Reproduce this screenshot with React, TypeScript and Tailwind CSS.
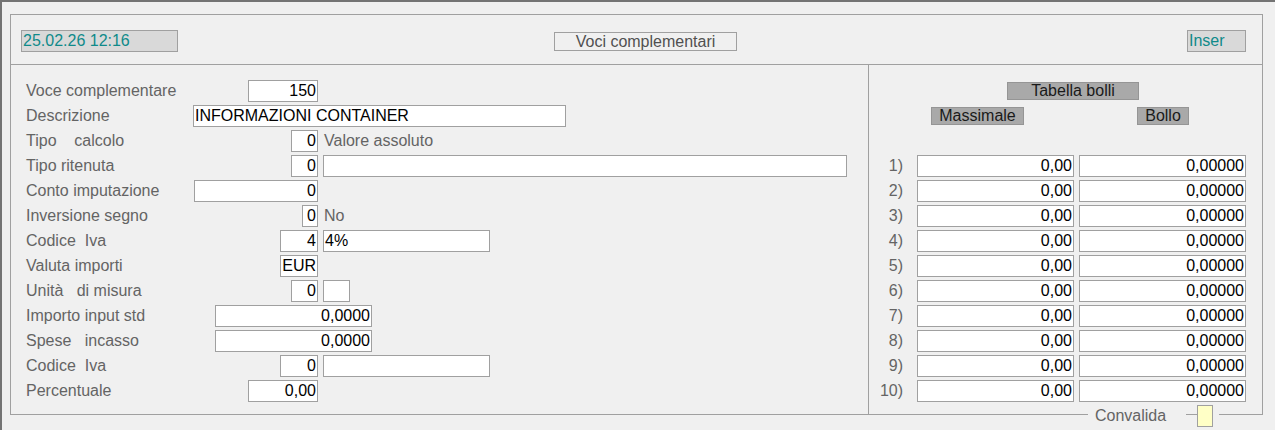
import React from 'react';

const Field = ({ className = '', value = '', left = false }: { className?: string; value?: string; left?: boolean }) => (
  <div
    className={`flex h-[22px] shrink-0 items-center border border-[#a0a0a0] bg-white text-black ${
      left ? 'justify-start pl-[1px]' : 'justify-end pr-[1px]'
    } ${className}`}
  >
    {value}
  </div>
);

const Note = ({ children }: { children: React.ReactNode }) => (
  <span className="ml-[6px] text-[#646464]">{children}</span>
);

type Row = {
  label: string;
  box: string;
  value: string;
  left?: boolean;
  extra?: React.ReactNode;
};

const rows: Row[] = [
  { label: 'Voce complementare', box: 'ml-[55px] w-[70px]', value: '150' },
  { label: 'Descrizione', box: 'w-[373px]', value: 'INFORMAZIONI CONTAINER', left: true },
  { label: 'Tipo    calcolo', box: 'ml-[98px] w-[27px]', value: '0', extra: <Note>Valore assoluto</Note> },
  { label: 'Tipo ritenuta', box: 'ml-[98px] w-[27px]', value: '0', extra: <Field className="ml-[5px] w-[524px]" /> },
  { label: 'Conto imputazione', box: 'ml-[1px] w-[124px]', value: '0' },
  { label: 'Inversione segno', box: 'ml-[109px] w-[16px]', value: '0', extra: <Note>No</Note> },
  { label: 'Codice  Iva', box: 'ml-[87px] w-[38px]', value: '4', extra: <Field className="ml-[5px] w-[167px]" value="4%" left /> },
  { label: 'Valuta importi', box: 'ml-[87px] w-[38px]', value: 'EUR' },
  { label: 'Unità   di misura', box: 'ml-[98px] w-[27px]', value: '0', extra: <Field className="ml-[5px] w-[27px]" /> },
  { label: 'Importo input std', box: 'ml-[22px] w-[157px]', value: '0,0000' },
  { label: 'Spese   incasso', box: 'ml-[22px] w-[157px]', value: '0,0000' },
  { label: 'Codice  Iva', box: 'ml-[87px] w-[38px]', value: '0', extra: <Field className="ml-[5px] w-[167px]" /> },
  { label: 'Percentuale', box: 'ml-[55px] w-[70px]', value: '0,00' },
];

const bolli = Array.from({ length: 10 }, (_, i) => i + 1);

export default function App() {
  return (
    <div className="h-[430px] w-full overflow-hidden border-l-2 border-t-2 border-[#747474] bg-[#f0f0f0] font-['Liberation_Sans',Arial,sans-serif] text-[16px] leading-none">
      <div className="relative ml-[8px] mt-[12px] h-[401px] w-[1253px] border border-[#a0a0a0]">
        {/* header */}
        <div className="flex h-[50px] items-start border-b border-[#a0a0a0] pt-[15px]">
          <div className="ml-[10px] flex h-[22px] w-[157px] items-center border border-[#a0a0a0] bg-[#d9d9d9] pl-[1px] text-[#0f8a8a]">
            25.02.26 12:16
          </div>
          <div className="ml-[376px] mt-[2px] flex h-[19px] w-[183px] items-center justify-center border border-[#a0a0a0] text-[#505050]">
            Voci complementari
          </div>
          <div className="flex-1" />
          <div className="mr-[16px] flex h-[22px] w-[59px] items-center border border-[#a0a0a0] bg-[#d9d9d9] pl-[1px] text-[#0f8a8a]">
            Inser
          </div>
        </div>

        {/* body */}
        <div className="flex h-[349px]">
          <div className="flex w-[858px] flex-col gap-[3px] border-r border-[#a0a0a0] pl-[15px] pt-[15px]">
            {rows.map((r, i) => (
              <div key={i} className="flex h-[22px] items-center">
                <span className="w-[167px] shrink-0 whitespace-pre text-[#646464]">{r.label}</span>
                <Field className={r.box} value={r.value} left={r.left} />
                {r.extra}
              </div>
            ))}
          </div>

          <div className="flex flex-1 flex-col pt-[17px]">
            <div className="ml-[138px] flex h-[18px] w-[132px] items-center justify-center border border-[#959595] bg-[#a9a9a9] text-[#1a1a1a]">
              Tabella bolli
            </div>
            <div className="mt-[7px] flex">
              <div className="ml-[62px] flex h-[18px] w-[93px] items-center justify-center border border-[#959595] bg-[#a9a9a9] text-[#1a1a1a]">
                Massimale
              </div>
              <div className="ml-[113px] flex h-[18px] w-[52px] items-center justify-center border border-[#959595] bg-[#a9a9a9] text-[#1a1a1a]">
                Bollo
              </div>
            </div>
            <div className="mt-[30px] flex flex-col gap-[3px]">
              {bolli.map((n) => (
                <div key={n} className="flex h-[22px] items-center">
                  <span className="w-[34px] shrink-0 text-right text-[#646464]">{n})</span>
                  <Field className="ml-[14px] w-[157px]" value="0,00" />
                  <Field className="ml-[5px] w-[167px]" value="0,00000" />
                </div>
              ))}
            </div>
          </div>
        </div>

        {/* legend sitting on the bottom border */}
        <div className="absolute left-[1077px] top-[390px] flex items-start">
          <span className="flex h-[22px] w-[98px] items-center bg-[#f0f0f0] pl-[7px] text-[#646464]">Convalida</span>
          <span className="h-[22px] w-[11px]" />
          <span className="h-[22px] w-[16px] border border-[#a0a0a0] bg-[#ffffc6]" />
          <span className="h-[22px] w-[6px] bg-[#f0f0f0]" />
        </div>
      </div>
    </div>
  );
}
